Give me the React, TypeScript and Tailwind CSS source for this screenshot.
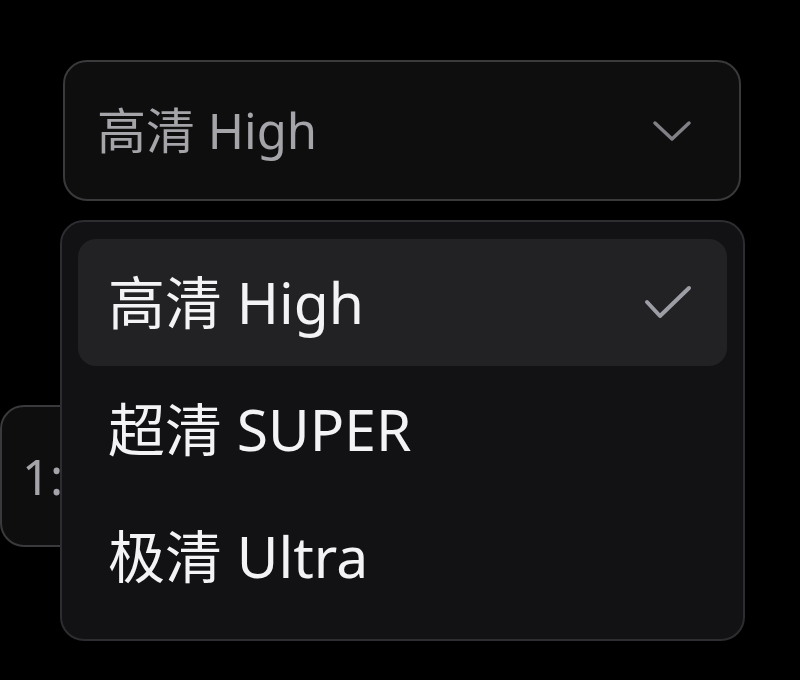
import { useState } from "react";

interface QualityOption {
  label: string;
  value: string;
}

const options: Array<QualityOption> = [
  { label: "高清 High", value: "high" },
  { label: "超清 SUPER", value: "super" },
  { label: "极清 Ultra", value: "ultra" },
];

const font = "font-['Noto_Sans','Noto_Sans_CJK_SC',sans-serif]";

function ChevronDown() {
  return (
    <svg width="40" height="24" viewBox="0 0 40 24" fill="none">
      <polyline
        points="3,4 20,20 37,4"
        stroke="#808086"
        strokeWidth="3.5"
        strokeLinecap="round"
        strokeLinejoin="round"
      />
    </svg>
  );
}

function Check() {
  return (
    <svg width="50" height="36" viewBox="0 0 50 36" fill="none">
      <polyline
        points="4,17 17,31 46,3"
        stroke="#9d9da5"
        strokeWidth="4"
        strokeLinecap="round"
        strokeLinejoin="round"
      />
    </svg>
  );
}

export default function App() {
  const [selected, setSelected] = useState("high");
  const current = options.find((o) => o.value === selected) ?? options[0];

  return (
    <div className={`relative min-h-[680px] w-[800px] overflow-hidden bg-black ${font}`}>
      <div className="pt-[60px] pl-[63px]">
        <button className="flex h-[141px] w-[678px] items-center justify-between rounded-[24px] border-2 border-[#3a3a3d] bg-[#0e0e0f] pr-[47px] pl-[32px]">
          <span className="text-[49px] leading-none text-[#a4a4a9]">
            {current.label}
          </span>
          <ChevronDown />
        </button>
      </div>

      <div className="mt-[204px] flex">
        <div className="flex h-[142px] w-[200px] items-center rounded-[24px] border-2 border-[#3a3a3d] bg-[#0e0e0f] pl-[20px] text-[49px] leading-none text-[#a4a4a9]">
          1:1
        </div>
      </div>

      <div className="absolute top-[220px] left-[60px] flex h-[421px] w-[685px] flex-col rounded-[24px] border-2 border-[#2d2d31] bg-[#121214] p-[16px] pt-[17px]">
        {options.map((o) => (
          <div
            key={o.value}
            onClick={() => setSelected(o.value)}
            className={`flex h-[127px] cursor-pointer items-center justify-between rounded-[18px] pr-[34px] pl-[30px] ${
              o.value === selected ? "bg-[#222225]" : ""
            }`}
          >
            <span className="text-[57px] leading-none text-[#f3f3f5]">
              {o.label}
            </span>
            {o.value === selected && <Check />}
          </div>
        ))}
      </div>
    </div>
  );
}
